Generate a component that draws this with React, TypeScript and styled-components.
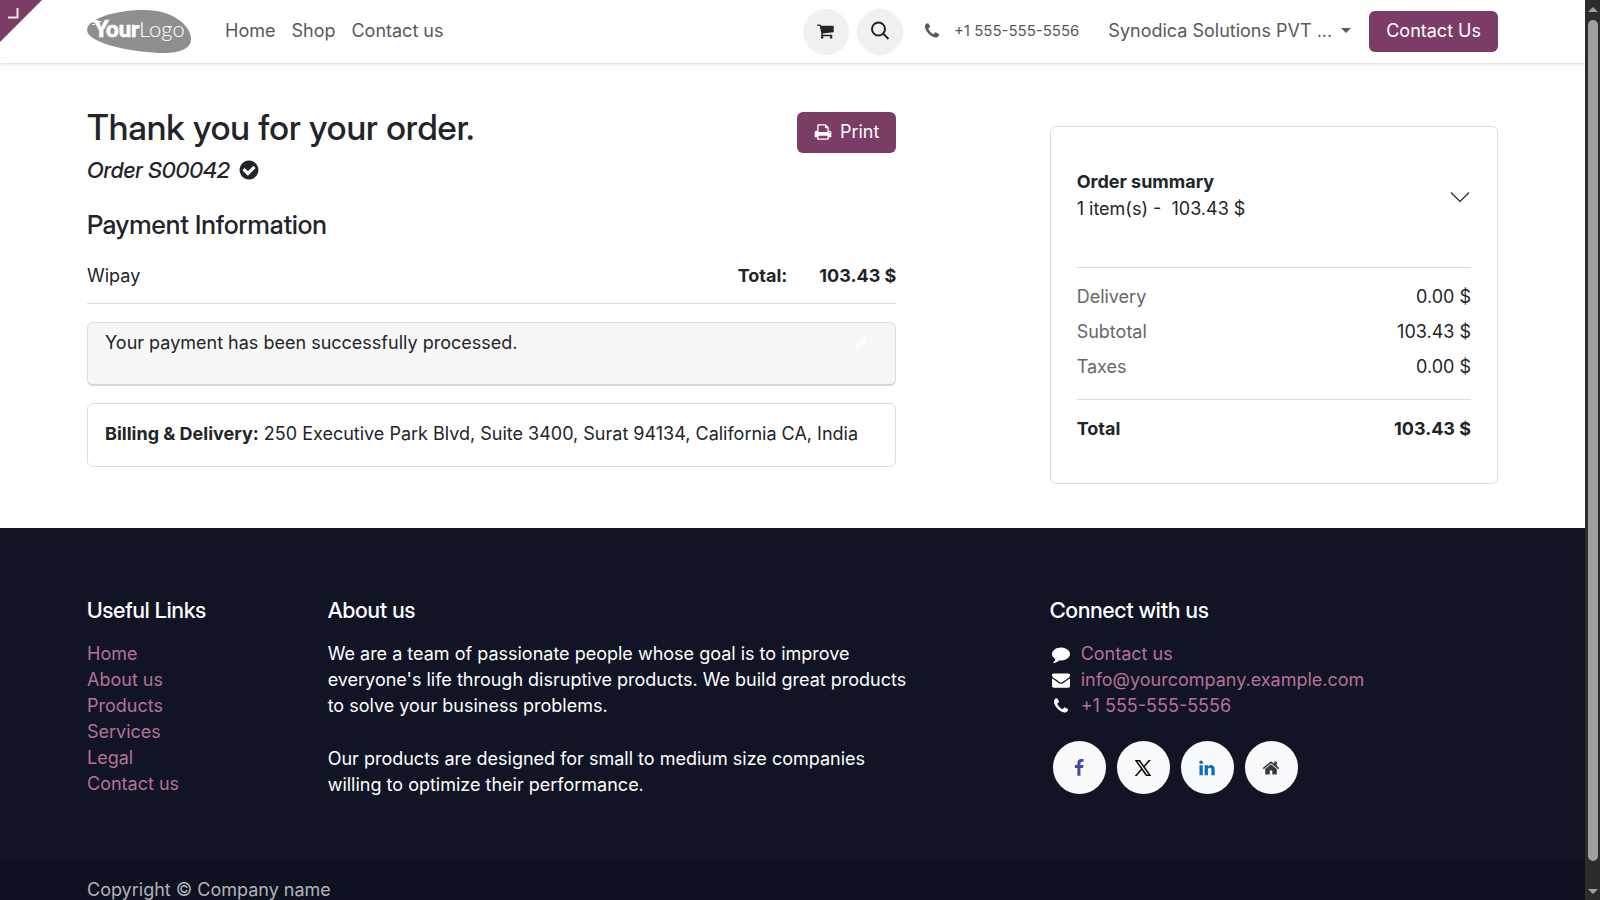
import React from 'react';
import styled, { createGlobalStyle } from 'styled-components';

const color = {
  primary: '#7b3c66',
  text: '#212529',
  muted: '#656769',
  nav: '#595959',
  line: '#dcdddf',
  soft: '#f7f7f7',
  footer: '#111425',
  footerBar: '#0e1120',
  footerLink: '#b66f9e',
};

const headingFont = '"Inter Display", Inter, "Liberation Sans", sans-serif';

const GlobalStyle = createGlobalStyle`
  *, *::before, *::after { box-sizing: border-box; }
  body {
    margin: 0;
    background: #fff;
    color: ${color.text};
    font: 400 18px/26px Inter, "Liberation Sans", sans-serif;
  }
  h1, h2, h3, p, ul { margin: 0; padding: 0; font-weight: inherit; }
  ul { list-style: none; }
  a { text-decoration: none; color: inherit; }
  button { font: inherit; cursor: pointer; }
`;

const Window = styled.div`
  display: flex;
  height: 100vh;
  overflow: hidden;
`;

const Page = styled.div`
  position: relative;
  flex: 1;
  min-width: 0;
  overflow: hidden;
`;

const Container = styled.div`
  width: 90%;
  max-width: 1411px;
  margin: 0 auto;
`;

const Columns = styled(Container)`
  display: grid;
  grid-template-columns: repeat(12, minmax(0, 1fr));
  column-gap: 33px;
  align-items: start;
`;

/* Scroll track */
const Track = styled.div`
  display: flex;
  flex-direction: column;
  align-items: center;
  justify-content: space-between;
  width: 15px;
  padding: 7px 0 6px;
  background: #2c2c2c;
`;

const Thumb = styled.div`
  flex: 1;
  width: 10px;
  margin: 8px 0 28px;
  border-radius: 5px;
  background: #9f9f9f;
`;

const Arrow = styled.span<{ $down?: boolean }>`
  border: 5px solid transparent;
  border-top: ${p => (p.$down ? '5px solid #9f9f9f' : '0')};
  border-bottom: ${p => (p.$down ? '0' : '5px solid #9f9f9f')};
`;

/* Header */
const Header = styled.header`
  box-shadow: 0 1px 3px rgba(0, 0, 0, 0.16);
`;

const HeaderRow = styled(Container)`
  display: flex;
  align-items: center;
  justify-content: space-between;
  height: 63px;
`;

const Corner = styled.button`
  position: absolute;
  top: 0;
  left: 0;
  width: 42px;
  height: 42px;
  padding: 0;
  border: 0;
  background: ${color.primary};
  clip-path: polygon(0 0, 100% 0, 0 100%);
  svg { display: block; }
`;

const Group = styled.div<{ $gap: number }>`
  display: flex;
  align-items: center;
  gap: ${p => p.$gap}px;
`;

const Nav = styled.nav`
  display: flex;
  gap: 16px;
  padding-bottom: 2px;
  color: ${color.nav};
`;

const LogoLink = styled.a`
  display: flex;
`;

const RoundButton = styled.button`
  display: flex;
  align-items: center;
  justify-content: center;
  width: 46px;
  height: 46px;
  padding: 0 0 2px;
  border: 0;
  border-radius: 50%;
  background: #f1f1f1;
  color: ${color.text};
`;

const Phone = styled.a`
  display: flex;
  align-items: center;
  gap: 13px;
  padding-bottom: 2px;
  font-size: 15px;
  color: ${color.nav};
`;

const UserMenu = styled.button`
  display: flex;
  align-items: center;
  gap: 9px;
  padding: 0 0 2px;
  border: 0;
  background: none;
  color: ${color.nav};
`;

const Caret = styled.span`
  border: 5px solid transparent;
  border-top-color: currentColor;
  border-bottom: 0;
`;

const PrimaryButton = styled.button`
  display: flex;
  align-items: center;
  gap: 8px;
  height: 41px;
  padding: 0 17px 2px;
  border: 0;
  border-radius: 6px;
  background: ${color.primary};
  color: #fff;
`;

/* Order confirmation */
const Main = styled(Columns).attrs({ as: 'main' })`
  padding: 42px 0 44px;
`;

const Confirmation = styled.section`
  grid-column: span 7;
`;

const TitleRow = styled.div`
  display: flex;
  justify-content: space-between;
  align-items: flex-end;
  margin-bottom: 4px;
`;

const Title = styled.h1`
  padding-bottom: 4px;
  font: 500 35px/44px ${headingFont};
`;

const OrderNumber = styled.p`
  display: flex;
  align-items: center;
  gap: 8px;
  font: italic 500 22px/26px ${headingFont};
`;

const SectionTitle = styled.h2`
  margin: 26px 0 22px;
  font: 500 26px/32px ${headingFont};
`;

const PaymentRow = styled.div`
  display: flex;
  justify-content: space-between;
  padding-bottom: 14px;
  border-bottom: 1px solid ${color.line};
`;

const Notice = styled.div`
  display: flex;
  justify-content: space-between;
  height: 64px;
  margin-top: 18px;
  padding: 7px 26px 0 17px;
  border: 1px solid ${color.line};
  border-bottom: 2px solid #d4d5d6;
  border-radius: 6px;
  background: ${color.soft};
  svg { color: #fff; margin-top: 5px; }
`;

const Address = styled.div`
  margin-top: 17px;
  padding: 17px 17px 19px;
  border: 1px solid ${color.line};
  border-radius: 6px;
`;

const Summary = styled.aside`
  grid-column: 9 / span 4;
  margin-top: 21px;
  padding: 41px 26px 26px;
  border: 1px solid ${color.line};
  border-radius: 6px;
`;

const SummaryToggle = styled.button`
  display: flex;
  align-items: center;
  justify-content: space-between;
  width: 100%;
  padding: 0 1px 45px 0;
  border: 0;
  background: none;
  color: inherit;
  text-align: left;
  line-height: 27px;
  svg { margin-top: 4px; }
`;

const Line = styled.span`
  display: block;
  white-space: pre;
`;

const Totals = styled.table`
  width: 100%;
  border-collapse: separate;
  border-spacing: 0;
  th, td { height: 35px; padding: 0; }
  th { font-weight: 400; text-align: left; color: ${color.muted}; }
  td { text-align: right; }
`;

const TotalsGroup = styled.tbody<{ $strong?: boolean }>`
  tr:first-child > * { height: 47px; padding-top: 12px; border-top: 1px solid ${color.line}; }
  tr:last-child > * { padding-bottom: ${p => (p.$strong ? 11 : 15)}px; height: ${p => (p.$strong ? 58 : 50)}px; }
  th, td { ${p => p.$strong && `font-weight: 700; color: ${color.text};`} }
`;

/* Footer */
const Footer = styled.footer`
  background: ${color.footer};
  color: #fff;
`;

const FooterColumns = styled(Columns)`
  padding: 68px 0 62px;
`;

const FooterColumn = styled.section<{ $start: number; $span: number }>`
  grid-column: ${p => p.$start} / span ${p => p.$span};
`;

const FooterTitle = styled.h3`
  margin-bottom: 17px;
  font: 500 22px/28px ${headingFont};
`;

const FooterLinks = styled.ul`
  color: ${color.footerLink};
`;

const Paragraph = styled.p`
  max-width: 586px;
  & + & { margin-top: 27px; }
`;

const ContactLine = styled.li`
  display: flex;
  align-items: center;
  gap: 9px;
  svg { width: 22px; color: #fff; }
`;

const Socials = styled.div`
  display: flex;
  gap: 11px;
  padding: 22px 3px 0;
`;

const Social = styled.a<{ $color: string }>`
  display: flex;
  align-items: center;
  justify-content: center;
  width: 53px;
  height: 53px;
  border-radius: 50%;
  background: #f8f9fa;
  color: ${p => p.$color};
`;

const CopyrightBar = styled.div`
  padding: 17px 0;
  background: ${color.footerBar};
  color: #b2b3b6;
`;

const paths = {
  cart: 'M640 1536q0 52-38 90t-90 38-90-38-38-90 38-90 90-38 90 38 38 90zm896 0q0 52-38 90t-90 38-90-38-38-90 38-90 90-38 90 38 38 90zm128-1088v512q0 24-16.500 42.500t-40.500 21.500l-1044 122q13 60 13 70 0 16-24 64h920q26 0 45 19t19 45-19 45-45 19h-1024q-26 0-45-19t-19-45q0-11 8-31.500t16-36 21.500-40 15.500-29.500l-177-823h-204q-26 0-45-19t-19-45 19-45 45-19h256q16 0 28.500 6.500t19.500 15.500 13 24.500 8 26 5.500 29.500 4.500 26h1201q26 0 45 19t19 45z',
  phone: 'M1600 1240q0 27-10 70.500t-21 68.500q-21 50-122 106-94 51-186 51-27 0-53-3.500t-57.500-12.500-47-14.500-55.500-20.500-49-18q-98-35-175-83-127-79-264-216t-216-264q-48-77-83-175-3-9-18-49t-20.500-55.500-14.500-47-12.500-57.500-3.500-53q0-92 51-186 56-101 106-122 25-11 68.500-21t70.500-10q14 0 21 3 18 6 53 76 11 19 30 54t35 63.500 31 53.500q3 4 17.500 25t21.500 35.500 7 28.500q0 20-28.500 50t-62 55-62 53-28.500 46q0 9 5 22.500t8.500 20.500 14 24 11.500 19q76 137 174 235t235 174q2 1 19 11.500t24 14 20.500 8.500 22.500 5q18 0 46-28.500t53-62 55-62 50-28.500q14 0 28.500 7t35.500 21.500 25 17.500q25 15 53.500 31t63.500 35 54 30q70 35 76 53 3 7 3 21z',
  print: 'M448 1536h896v-256h-896v256zm0-640h896v-384h-160q-40 0-68-28t-28-68v-160h-640v640zm1152 64q0-26-19-45t-45-19-45 19-19 45 19 45 45 19 45-19 19-45zm128 0v416q0 13-9.500 22.500t-22.500 9.500h-224v160q0 40-28 68t-68 28h-960q-40 0-68-28t-28-68v-160h-224q-13 0-22.500-9.500t-9.500-22.500v-416q0-79 56.500-135.500t135.500-56.500h64v-544q0-40 28-68t68-28h672q40 0 88 20t76 48l152 152q28 28 48 76t20 88v256h64q79 0 135.500 56.500t56.500 135.500z',
  check: 'M1412 734q0-28-18-46l-91-90q-19-19-45-19t-45 19l-408 407-226-226q-19-19-45-19t-45 19l-91 90q-18 18-18 46 0 27 18 45l362 362q19 19 45 19 27 0 46-19l543-543q18-18 18-45zm252 162q0 209-103 385.500t-279.500 279.500-385.500 103-385.500-103-279.500-279.500-103-385.500 103-385.500 279.500-279.500 385.500-103 385.500 103 279.500 279.500 103 385.500z',
  comment: 'M1792 896q0 174-120 321.500t-326 233-450 85.500q-70 0-145-8-198 175-460 242-49 14-114 22-17 2-30.500-9t-17.500-29v-1q-3-4-.5-12t2-10 4.500-9.500l6-9 7-8.500 8-9q7-8 31-34.500t34.500-38 31-39.500 32.500-51 27-59 26-76q-157-89-247.500-220t-90.500-281q0-130 71-248.500t191-204.500 286-136.500 348-50.500q244 0 450 85.500t326 233 120 321.500z',
  envelope: 'M1792 710v794q0 66-47 113t-113 47h-1472q-66 0-113-47t-47-113v-794q44 49 101 87 362 246 497 345 57 42 92.500 65.500t94.500 48 110 24.500h2q51 0 110-24.500t94.500-48 92.500-65.500q170-123 498-345 57-39 100-87zm0-294q0 79-49 151t-122 123q-376 261-468 325-10 7-42.500 31t-54 38.500-52 32.500-57.500 27-50 9h-2q-23 0-50-9t-57.500-27-52-32.500-54-38.500-42.500-31q-91-64-262-182.500t-205-142.500q-62-42-117-115.500t-55-136.500q0-78 41.500-130t118.500-52h1472q65 0 112.500 47t47.500 113z',
  home: 'M1472 992v480q0 26-19 45t-45 19h-384v-384h-256v384h-384q-26 0-45-19t-19-45v-480q0-1 .5-3t.5-3l575-474 575 474q1 2 1 6zm223-69l-62 74q-8 9-21 11h-3q-13 0-21-7l-692-577-692 577q-12 8-24 7-13-2-21-11l-62-74q-8-10-7-23.500t11-21.500l719-599q32-26 76-26t76 26l244 204v-195q0-14 9-23t23-9h192q14 0 23 9t9 23v408l219 182q10 8 11 21.500t-7 23.500z',
  facebook: 'M1343 12v264h-157q-86 0-116 36t-30 108v189h293l-39 296h-254v759h-306v-759h-255v-296h255v-218q0-186 104-288.500t277-102.500q147 0 228 12z',
  linkedin: 'M477 625v991h-330v-991h330zm21-306q1 73-50.500 122t-135.500 49h-2q-82 0-132-49t-50-122q0-74 51.500-122.500t134.500-48.500 133 48.500 51 122.500zm1166 729v568h-329v-530q0-105-40.500-164.500t-126.500-59.500q-63 0-105.500 34.500t-63.500 85.500q-11 30-11 81v553h-329q2-399 2-647t-1-296l-1-48h329v144h-2q20-32 41-56t56.500-52 87-43.500 114.500-15.500q171 0 275 113.500t104 332.500z',
  pencil: 'M491 1536l91-91-235-235-91 91v107h128v128h107zm523-928q0-22-22-22-10 0-17 7l-542 542q-7 7-7 17 0 22 22 22 10 0 17-7l542-542q7-7 7-17zm-54-192l416 416-832 832h-416v-416zm683 96q0 53-37 90l-166 166-416-416 166-165q36-38 90-38 53 0 91 38l235 234q37 39 37 91z',
};

const Icon = ({ name, size = 18 }: { name: keyof typeof paths; size?: number }) => (
  <svg width={size} height={size} viewBox="0 0 1792 1792" fill="currentColor" aria-hidden="true">
    <path d={paths[name]} />
  </svg>
);

const Logo = () => (
  <svg width="105" height="44" viewBox="0 0 105 44" aria-label="YourLogo">
    <path
      d="M0 20C0 8 30 0 58 0C86 0 104 16 104 29C104 39 92 43 77 43C50 43 0 34 0 20Z"
      fill="#8f8f8f"
    />
    <path d="M4 11H14V12.500H4ZM5 14H8V15H5Z" fill="#fff" />
    <text x="7" y="27" fill="#fff" stroke="#fff" strokeWidth="0.700" fontFamily="Lato, sans-serif" fontSize="22" fontWeight="900">Your</text>
    <text x="52" y="27" fill="#fff" fontFamily="Lato, sans-serif" fontSize="22" fontWeight="300">Logo</text>
  </svg>
);

const usefulLinks = ['Home', 'About us', 'Products', 'Services', 'Legal', 'Contact us'];

export default function App() {
  return (
    <>
      <GlobalStyle />
      <Window>
        <Page>
          <Header>
            <HeaderRow>
              <Group $gap={33}>
                <LogoLink href="#"><Logo /></LogoLink>
                <Nav>
                  <a href="#">Home</a>
                  <a href="#">Shop</a>
                  <a href="#">Contact us</a>
                </Nav>
              </Group>
              <Group $gap={18}>
                <Group $gap={29}>
                  <Group $gap={20}>
                    <Group $gap={8}>
                      <RoundButton aria-label="Cart"><Icon name="cart" /></RoundButton>
                      <RoundButton aria-label="Search">
                        <svg width="20" height="20" viewBox="0 0 20 20" fill="none" stroke="currentColor" strokeWidth="2" aria-hidden="true">
                          <circle cx="8.500" cy="8" r="6.500" />
                          <path d="M13 12.500L18.500 18" />
                        </svg>
                      </RoundButton>
                    </Group>
                    <Phone href="#"><Icon name="phone" />+1 555-555-5556</Phone>
                  </Group>
                  <UserMenu>Synodica Solutions PVT ...<Caret /></UserMenu>
                </Group>
                <PrimaryButton>Contact Us</PrimaryButton>
              </Group>
            </HeaderRow>
          </Header>
          <Corner aria-label="Open editor">
            <svg width="42" height="42" viewBox="0 0 42 42" fill="none" stroke="#efe6ec" strokeWidth="2" aria-hidden="true">
              <path d="M8 17.500H17.500V8" />
            </svg>
          </Corner>

          <Main>
            <Confirmation>
              <TitleRow>
                <Title>Thank you for your order.</Title>
                <PrimaryButton><Icon name="print" />Print</PrimaryButton>
              </TitleRow>
              <OrderNumber>Order S00042 <Icon name="check" size={22} /></OrderNumber>
              <SectionTitle>Payment Information</SectionTitle>
              <PaymentRow>
                <span>Wipay</span>
                <Group $gap={32}><b>Total:</b><b>103.43 $</b></Group>
              </PaymentRow>
              <Notice>
                Your payment has been successfully processed.
                <Icon name="pencil" size={14} />
              </Notice>
              <Address>
                <b>Billing &amp; Delivery:</b> 250 Executive Park Blvd, Suite 3400, Surat 94134, California CA, India
              </Address>
            </Confirmation>

            <Summary>
              <SummaryToggle>
                <span>
                  <Line><b>Order summary</b></Line>
                  <Line>1 item(s) -  103.43 $</Line>
                </span>
                <svg width="20" height="12" viewBox="0 0 20 12" fill="none" stroke="currentColor" strokeWidth="1.200" aria-hidden="true">
                  <path d="M1 1.500L10 10.500L19 1.500" />
                </svg>
              </SummaryToggle>
              <Totals>
                <TotalsGroup>
                  <tr><th scope="row">Delivery</th><td>0.00 $</td></tr>
                  <tr><th scope="row">Subtotal</th><td>103.43 $</td></tr>
                  <tr><th scope="row">Taxes</th><td>0.00 $</td></tr>
                </TotalsGroup>
                <TotalsGroup $strong>
                  <tr><th scope="row">Total</th><td>103.43 $</td></tr>
                </TotalsGroup>
              </Totals>
            </Summary>
          </Main>

          <Footer>
            <FooterColumns>
              <FooterColumn $start={1} $span={2}>
                <FooterTitle>Useful Links</FooterTitle>
                <FooterLinks>
                  {usefulLinks.map(label => <li key={label}><a href="#">{label}</a></li>)}
                </FooterLinks>
              </FooterColumn>
              <FooterColumn $start={3} $span={6}>
                <FooterTitle>About us</FooterTitle>
                <Paragraph>
                  We are a team of passionate people whose goal is to improve everyone's life through
                  disruptive products. We build great products to solve your business problems.
                </Paragraph>
                <Paragraph>
                  Our products are designed for small to medium size companies willing to optimize their performance.
                </Paragraph>
              </FooterColumn>
              <FooterColumn $start={9} $span={4}>
                <FooterTitle>Connect with us</FooterTitle>
                <FooterLinks>
                  <ContactLine><Icon name="comment" /><a href="#">Contact us</a></ContactLine>
                  <ContactLine><Icon name="envelope" /><a href="#">info@yourcompany.example.com</a></ContactLine>
                  <ContactLine><Icon name="phone" /><a href="#">+1 555-555-5556</a></ContactLine>
                </FooterLinks>
                <Socials>
                  <Social href="#" aria-label="Facebook" $color="#4449a4"><Icon name="facebook" /></Social>
                  <Social href="#" aria-label="X" $color="#000">
                    <svg width="16" height="16" viewBox="0 0 24 24" fill="currentColor" stroke="currentColor" strokeWidth="0.900" aria-hidden="true">
                      <path d="M14.258 10.152L23.176 0h-2.113l-7.747 8.813L7.133 0H0l9.352 13.328L0 23.973h2.113l8.176-9.309 6.531 9.309h7.133zm-2.895 3.293l-.949-1.328L2.875 1.560h3.246l6.086 8.523.945 1.328 7.910 11.078h-3.246z" />
                    </svg>
                  </Social>
                  <Social href="#" aria-label="LinkedIn" $color="#0a6ebd"><Icon name="linkedin" /></Social>
                  <Social href="#" aria-label="Website" $color="#343a40"><Icon name="home" /></Social>
                </Socials>
              </FooterColumn>
            </FooterColumns>
            <CopyrightBar>
              <Container>Copyright © Company name</Container>
            </CopyrightBar>
          </Footer>
        </Page>
        <Track aria-hidden="true">
          <Arrow />
          <Thumb />
          <Arrow $down />
        </Track>
      </Window>
    </>
  );
}
